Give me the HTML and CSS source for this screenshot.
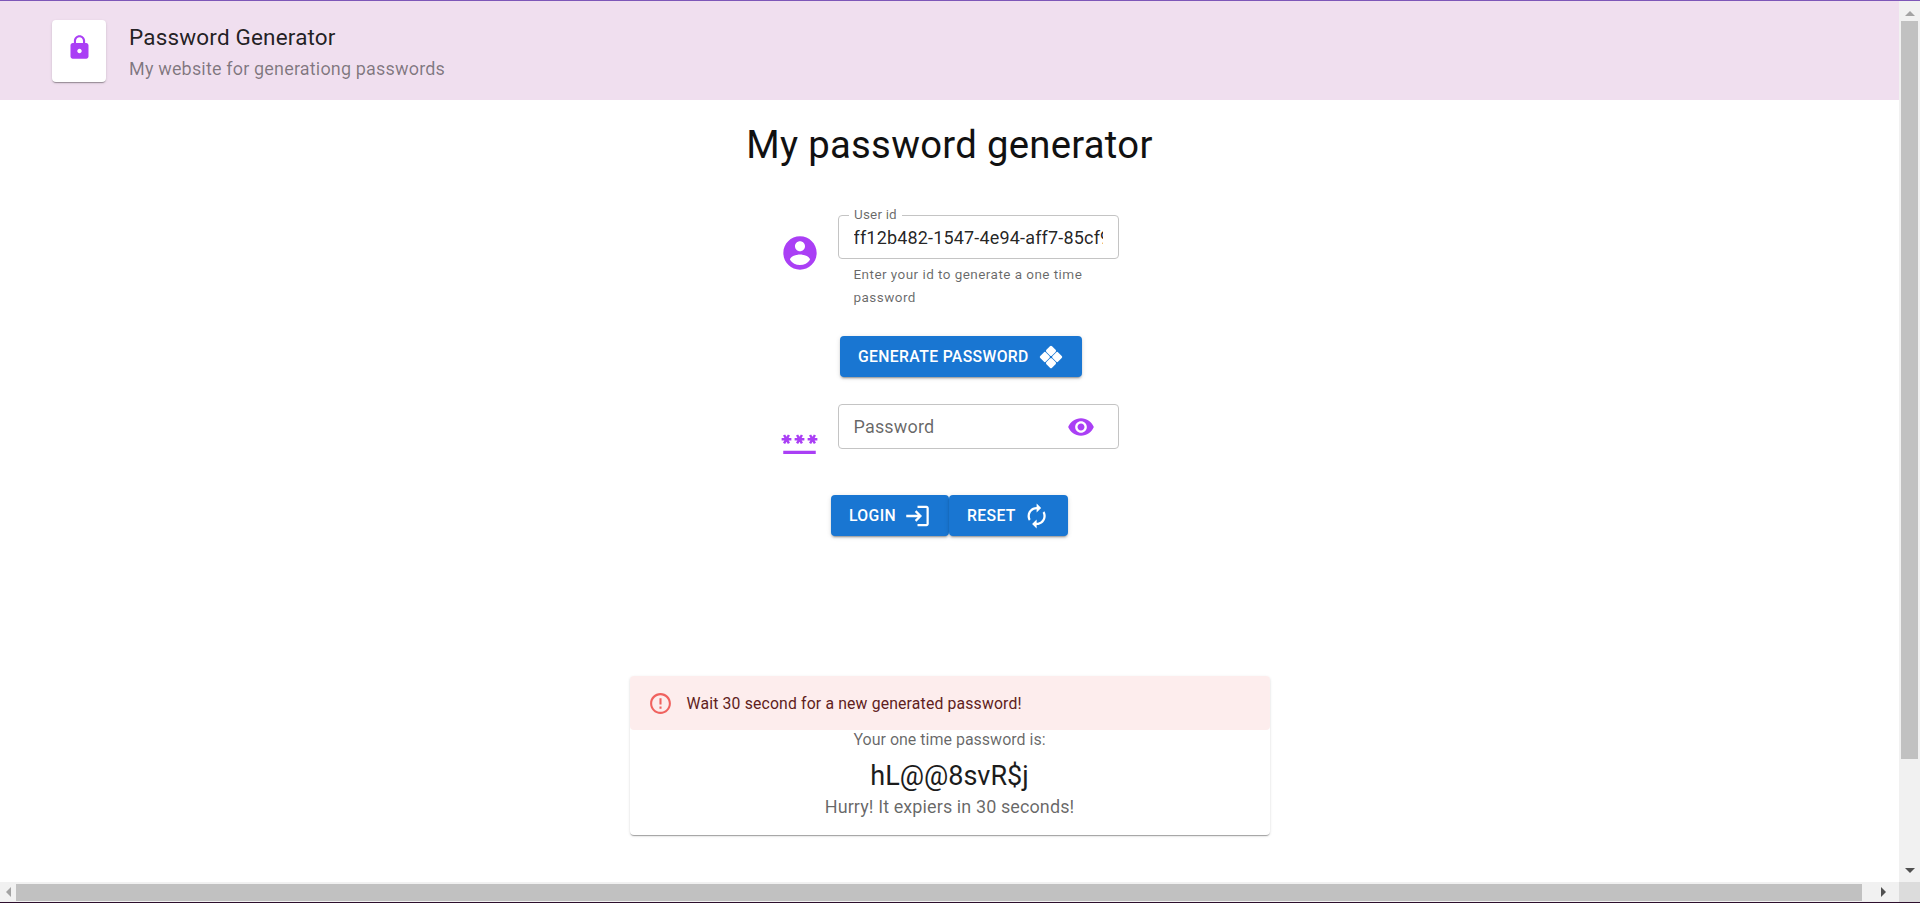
FILE: index.html
```html
<!DOCTYPE html>
<html lang="en">
<head>
    <meta charset="UTF-8">
    <meta name="viewport" content="width=device-width, initial-scale=1.0">
    <title>Password Generator</title>
    <link rel="stylesheet" href="styles.css">
</head>
<body>
    <div class="window">
        <div class="viewport">
            <header class="app-header">
                <div class="logo-box">
                    <svg class="logo-icon" viewBox="0 0 24 24"><path d="M18 8h-1V6c0-2.76-2.24-5-5-5S7 3.24 7 6v2H6c-1.1 0-2 .9-2 2v10c0 1.1.9 2 2 2h12c1.1 0 2-.9 2-2V10c0-1.1-.9-2-2-2zm-6 9c-1.1 0-2-.9-2-2s.9-2 2-2 2 .9 2 2-.9 2-2 2zm3.1-9H8.9V6c0-1.71 1.39-3.1 3.1-3.1 1.71 0 3.1 1.39 3.1 3.1v2z"/></svg>
                </div>
                <div>
                    <div class="app-title">Password Generator</div>
                    <div class="app-subtitle">My website for generationg passwords</div>
                </div>
            </header>

            <main class="content">
                <h1 class="page-title">My password generator</h1>

                <div class="field-row field-user">
                    <svg class="field-icon" viewBox="0 0 24 24"><path d="M12 2C6.48 2 2 6.48 2 12s4.48 10 10 10 10-4.48 10-10S17.52 2 12 2zm0 3c1.66 0 3 1.34 3 3s-1.34 3-3 3-3-1.34-3-3 1.34-3 3-3zm0 14.2c-2.5 0-4.71-1.28-6-3.22.03-1.99 4-3.08 6-3.08 1.99 0 5.97 1.09 6 3.08-1.29 1.94-3.5 3.22-6 3.22z"/></svg>
                    <div class="field">
                        <div class="outlined">
                            <span class="float-label">User id</span>
                            <span class="field-value">ff12b482-1547-4e94-aff7-85cf9</span>
                        </div>
                        <p class="helper">Enter your id to generate a one time password</p>
                    </div>
                </div>

                <button class="btn btn-generate">Generate password
                    <svg class="btn-icon-diamond" viewBox="0 0 24 24">
                        <rect x="8" y="1.85" width="8" height="8" rx="1.5" transform="rotate(45 12 5.85)"/>
                        <rect x="1.85" y="8" width="8" height="8" rx="1.5" transform="rotate(45 5.85 12)"/>
                        <rect x="14.15" y="8" width="8" height="8" rx="1.5" transform="rotate(45 18.15 12)"/>
                        <rect x="8" y="14.15" width="8" height="8" rx="1.5" transform="rotate(45 12 18.15)"/>
                    </svg>
                </button>

                <div class="field-row field-password">
                    <svg class="field-icon key-icon" viewBox="0 0 24 24"><path d="M2 17h20v2H2v-2zm1.15-4.05L4 11.47l.85 1.48 1.3-.75-.85-1.48H7v-1.5H5.3l.85-1.47L4.85 7 4 8.47 3.15 7l-1.3.75.85 1.47H1v1.5h1.7l-.85 1.48 1.3.75zm6.7-.75 1.3.75.85-1.48.85 1.48 1.3-.75-.85-1.48H15v-1.5h-1.7l.85-1.47-1.3-.75L12 8.47 11.15 7l-1.3.75.85 1.47H9v1.5h1.7l-.85 1.48zM23 9.22h-1.7l.85-1.47-1.3-.75L20 8.47 19.15 7l-1.3.75.85 1.47H17v1.5h1.7l-.85 1.48 1.3.75.85-1.48.85 1.48 1.3-.75-.85-1.48H23v-1.5z"/></svg>
                    <div class="field">
                        <div class="outlined password-box">
                            <span class="placeholder">Password</span>
                            <svg class="eye-icon" viewBox="0 0 24 24"><path d="M12 4.5C7 4.5 2.73 7.61 1 12c1.73 4.39 6 7.5 11 7.5s9.27-3.11 11-7.5c-1.73-4.39-6-7.5-11-7.5zM12 17c-2.76 0-5-2.24-5-5s2.24-5 5-5 5 2.24 5 5-2.24 5-5 5zm0-8c-1.66 0-3 1.34-3 3s1.34 3 3 3 3-1.34 3-3-1.34-3-3-3z"/></svg>
                        </div>
                    </div>
                </div>

                <div class="btn-group">
                    <button class="btn btn-login">Login
                        <svg class="btn-icon" viewBox="0 0 24 24"><path d="M11 7 9.6 8.4l2.6 2.6H2v2h10.2l-2.6 2.6L11 17l5-5-5-5zm9 12h-8v2h8c1.1 0 2-.9 2-2V5c0-1.1-.9-2-2-2h-8v2h8v14z"/></svg>
                    </button>
                    <button class="btn btn-reset">Reset
                        <svg class="btn-icon" viewBox="0 0 24 24"><path d="M12 6v3l4-4-4-4v3c-4.42 0-8 3.58-8 8 0 1.57.46 3.03 1.24 4.26L6.7 14.8c-.45-.83-.7-1.79-.7-2.8 0-3.31 2.69-6 6-6zm6.76 1.74L17.3 9.2c.44.84.7 1.79.7 2.8 0 3.31-2.69 6-6 6v-3l-4 4 4 4v-3c4.42 0 8-3.58 8-8 0-1.57-.46-3.03-1.24-4.26z"/></svg>
                    </button>
                </div>

                <section class="result-card">
                    <div class="alert">
                        <svg class="alert-icon" viewBox="0 0 24 24"><path d="M11 15h2v2h-2zm0-8h2v6h-2zm.99-5C6.47 2 2 6.48 2 12s4.47 10 9.99 10C17.52 22 22 17.52 22 12S17.52 2 11.99 2zM12 20c-4.42 0-8-3.58-8-8s3.58-8 8-8 8 3.58 8 8-3.58 8-8 8z"/></svg>
                        <span>Wait 30 second for a new generated password!</span>
                    </div>
                    <p class="result-label">Your one time password is:</p>
                    <p class="result-password">hL@@8svR$j</p>
                    <p class="result-note">Hurry! It expiers in 30 seconds!</p>
                </section>
            </main>
        </div>

        <div class="scroll-v">
            <span class="arrow arrow-up"></span>
            <div class="track-v"><div class="thumb-v"></div></div>
            <span class="arrow arrow-down"></span>
        </div>
        <div class="scroll-h">
            <span class="arrow arrow-left"></span>
            <div class="track-h"><div class="thumb-h"></div></div>
            <span class="arrow arrow-right"></span>
        </div>
        <div class="scroll-corner"></div>
    </div>
</body>
</html>
```

FILE: styles.css
```css
html, body {
    height: 100%;
}
body {
    margin: 0;
    font-family: 'Roboto', 'Liberation Sans', sans-serif;
    color: rgba(0, 0, 0, 0.87);
    background-color: #ffffff;
    overflow: hidden;
}
.window {
    height: 903px;
    box-sizing: border-box;
    border-top: 1px solid #7e57b8;
    border-bottom: 1px solid #2d0f2d;
    display: grid;
    grid-template-columns: 1899px 21px;
    grid-template-rows: 881px 20px;
}
.viewport {
    overflow: hidden;
}

/* header */
.app-header {
    height: 99px;
    box-sizing: border-box;
    padding: 19px 52px 0;
    background-color: #f0dfef;
    display: flex;
    align-items: flex-start;
    gap: 23px;
}
.logo-box {
    width: 54px;
    height: 62px;
    background: #ffffff;
    border-radius: 4px;
    box-shadow: 0 2px 1px -1px rgba(0, 0, 0, 0.2), 0 1px 1px rgba(0, 0, 0, 0.14), 0 1px 3px rgba(0, 0, 0, 0.12);
    display: flex;
    align-items: center;
    justify-content: center;
}
.logo-icon {
    width: 27px;
    height: 27px;
    fill: #aa3ff5;
    margin-bottom: 8px;
}
.app-title {
    font-size: 22.5px;
    line-height: 32px;
    letter-spacing: 0.17px;
    margin-top: 1px;
}
.app-subtitle {
    font-size: 18px;
    line-height: 28px;
    letter-spacing: 0.17px;
    color: rgba(0, 0, 0, 0.47);
    margin-top: 2px;
}

/* content */
.content {
    display: flex;
    flex-direction: column;
    align-items: center;
}
.page-title {
    margin: 20px 0 0;
    font-size: 38.25px;
    font-weight: 400;
    line-height: 50px;
    letter-spacing: 0.3px;
    color: #111111;
}
.field-row {
    width: 338px;
    display: flex;
    align-items: flex-start;
    gap: 18px;
    margin-left: 1px;
}
.field-user {
    margin-top: 45px;
}
.field-password {
    margin-top: 27px;
}
.field-icon {
    width: 40px;
    height: 40px;
    fill: #aa3ff5;
    flex: none;
    margin-top: 18px;
    margin-left: -1px;
}
.key-icon {
    width: 39px;
    height: 39px;
    margin-top: 19px;
    margin-right: 1px;
}
.field {
    width: 281px;
    flex: none;
}
.outlined {
    position: relative;
    height: 44px;
    box-sizing: border-box;
    border: 1px solid #c4c4c4;
    border-radius: 4px;
    padding: 0 15px 0 14.5px;
    display: flex;
    align-items: center;
    font-size: 18px;
    letter-spacing: 0.17px;
}
.password-box {
    height: 45px;
    justify-content: space-between;
    padding-right: 23px;
}
.float-label {
    position: absolute;
    top: -9px;
    left: 10px;
    padding: 0 5px;
    background: #ffffff;
    font-size: 13.5px;
    line-height: 14px;
    letter-spacing: 0.17px;
    color: rgba(0, 0, 0, 0.6);
}
.field-value {
    overflow: hidden;
    white-space: nowrap;
}
.placeholder {
    color: rgba(0, 0, 0, 0.6);
}
.eye-icon {
    width: 28px;
    height: 28px;
    fill: #aa3ff5;
}
.helper {
    margin: 4px 16px 0 15.5px;
    font-size: 13.5px;
    line-height: 23px;
    letter-spacing: 0.45px;
    color: rgba(0, 0, 0, 0.6);
}

/* buttons */
.btn {
    height: 41px;
    padding: 0 18px;
    border: none;
    border-radius: 4px;
    background-color: #1976d2;
    color: #ffffff;
    font-family: inherit;
    font-size: 15.75px;
    font-weight: 500;
    letter-spacing: 0.35px;
    text-transform: uppercase;
    box-shadow: 0 3px 1px -2px rgba(0, 0, 0, 0.2), 0 2px 2px rgba(0, 0, 0, 0.14), 0 1px 5px rgba(0, 0, 0, 0.12);
    display: flex;
    align-items: center;
    white-space: nowrap;
}
.btn-generate {
    margin-top: 27px;
    width: 242px;
    margin-left: 23px;
}
.btn-icon-diamond {
    width: 24px;
    height: 24px;
    fill: #ffffff;
    margin-left: 10px;
}
.btn-group {
    display: flex;
    margin-top: 33px;
    margin-left: 0;
}
.btn-login {
    width: 118px;
}
.btn-reset {
    width: 119px;
}
.btn-icon {
    width: 28px;
    height: 28px;
    fill: #ffffff;
    margin-left: 8px;
}
.btn-reset .btn-icon {
    margin-left: 7px;
}

/* result card */
.result-card {
    width: 640px;
    height: 159px;
    margin-top: 140px;
    background: #ffffff;
    border-radius: 4px;
    text-align: center;
    box-shadow: 0 2px 1px -1px rgba(0, 0, 0, 0.2), 0 1px 1px rgba(0, 0, 0, 0.14), 0 1px 3px rgba(0, 0, 0, 0.12);
}
.alert {
    height: 54px;
    box-sizing: border-box;
    padding: 0 20px 0 18px;
    background-color: #fdeded;
    border-radius: 4px;
    color: #5f2120;
    font-size: 15.75px;
    letter-spacing: 0.17px;
    display: flex;
    align-items: center;
    gap: 14px;
}
.alert-icon {
    width: 25px;
    height: 25px;
    fill: #ef5350;
    opacity: 0.9;
}
.result-card p {
    margin: 0;
}
.result-label {
    font-size: 16px;
    line-height: 20px;
    color: rgba(0, 0, 0, 0.6);
}
.result-password {
    font-size: 27px;
    line-height: 37px;
    margin-top: 8px !important;
    color: #1c1c1c;
}
.result-note {
    font-size: 18px;
    line-height: 24px;
    letter-spacing: 0.1px;
    color: rgba(0, 0, 0, 0.6);
}

/* browser scrollbars */
.scroll-v {
    background: #f1f1f1;
    display: flex;
    flex-direction: column;
    align-items: center;
}
.track-v {
    flex: 1;
    width: 17px;
}
.thumb-v {
    height: 738px;
    margin-top: 5px;
    background: #c1c1c1;
}
.scroll-h {
    background: #f1f1f1;
    display: flex;
    align-items: center;
}
.track-h {
    flex: 1;
    height: 17px;
}
.thumb-h {
    width: 1846px;
    height: 17px;
    background: #c1c1c1;
}
.scroll-corner {
    background: #dcdcdc;
}
.arrow {
    flex: none;
    width: 0;
    height: 0;
    border-style: solid;
    border-color: transparent;
}
.arrow-up {
    margin-top: 10px;
    border-width: 0 5px 5px;
    border-bottom-color: #a3a3a3;
}
.arrow-down {
    margin-bottom: 9px;
    border-width: 5px 5px 0;
    border-top-color: #505050;
}
.arrow-left {
    margin: 0 5px 0 6px;
    border-width: 5px 5px 5px 0;
    border-right-color: #a3a3a3;
}
.arrow-right {
    margin: 0 13px 0 0;
    border-width: 5px 0 5px 5px;
    border-left-color: #505050;
}
```
